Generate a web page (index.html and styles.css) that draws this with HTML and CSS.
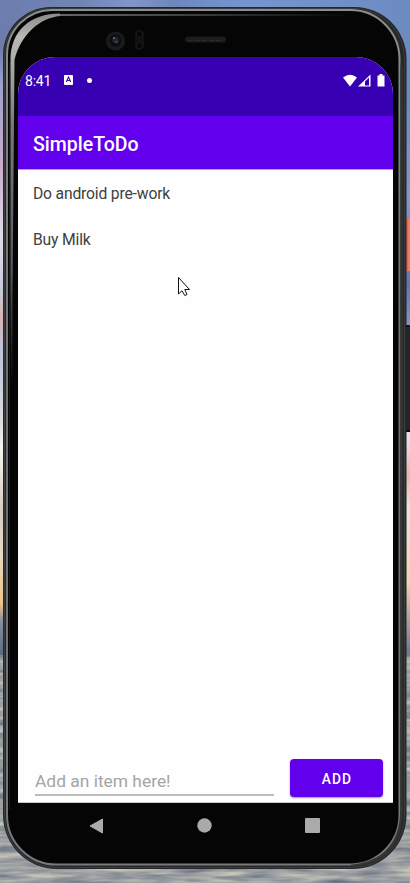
FILE: index.html
```
<!DOCTYPE html>
<html lang="en">
<head>
<meta charset="utf-8">
<title>SimpleToDo</title>
<link rel="stylesheet" href="styles.css">
</head>
<body>
<svg class="device" width="410" height="883" viewBox="0 0 410 883" aria-hidden="true">
  <defs>
    <linearGradient id="skyLeft" x1="0" y1="0" x2="0" y2="660" gradientUnits="userSpaceOnUse">
      <stop offset="0" stop-color="#6c80b0"/><stop offset=".07" stop-color="#6d7aac"/>
      <stop offset=".13" stop-color="#9ca3ce"/><stop offset=".25" stop-color="#cbaccd"/>
      <stop offset=".36" stop-color="#dfdce8"/><stop offset=".44" stop-color="#c9cbdc"/>
      <stop offset=".48" stop-color="#dcb5b2"/><stop offset=".53" stop-color="#bcc4da"/>
      <stop offset=".64" stop-color="#dcdcdf"/><stop offset=".68" stop-color="#f4f3ee"/>
      <stop offset=".77" stop-color="#d8cdc1"/><stop offset=".84" stop-color="#e8d9c4"/>
      <stop offset=".915" stop-color="#f0c384"/><stop offset=".94" stop-color="#8791a3"/>
      <stop offset="1" stop-color="#56647e"/>
    </linearGradient>
    <linearGradient id="skyRight" x1="0" y1="0" x2="0" y2="660" gradientUnits="userSpaceOnUse">
      <stop offset="0" stop-color="#6b8bc1"/><stop offset=".15" stop-color="#6c8bc2"/>
      <stop offset=".3" stop-color="#8995c6"/><stop offset=".43" stop-color="#6375ac"/>
      <stop offset=".49" stop-color="#8992bf"/><stop offset=".66" stop-color="#e3e3f0"/>
      <stop offset=".72" stop-color="#e5b6ad"/><stop offset=".77" stop-color="#e8e2df"/>
      <stop offset=".88" stop-color="#edd6b0"/><stop offset=".94" stop-color="#a9a29c"/>
      <stop offset="1" stop-color="#64708a"/>
    </linearGradient>
    <linearGradient id="topHues" x1="0" y1="0" x2="410" y2="0" gradientUnits="userSpaceOnUse">
      <stop offset="0" stop-color="#6c7dae"/><stop offset=".2" stop-color="#7185b5"/>
      <stop offset=".32" stop-color="#8295cb"/><stop offset=".42" stop-color="#6d87bd"/>
      <stop offset=".6" stop-color="#7595d0"/><stop offset="1" stop-color="#6b8bc1"/>
    </linearGradient>
    <linearGradient id="rim" x1="0" y1="8" x2="0" y2="869" gradientUnits="userSpaceOnUse">
      <stop offset="0" stop-color="#8c8f90"/><stop offset=".25" stop-color="#77797b"/>
      <stop offset=".5" stop-color="#6c6e72"/><stop offset="1" stop-color="#77797a"/>
    </linearGradient>
    <linearGradient id="gleam" x1="0" y1="15" x2="0" y2="380" gradientUnits="userSpaceOnUse">
      <stop offset="0" stop-color="#8c8e8a"/><stop offset=".06" stop-color="#b8b9b5"/>
      <stop offset=".14" stop-color="#a8aaa6"/>
      <stop offset=".3" stop-color="#77797b"/><stop offset=".7" stop-color="#55575a"/>
      <stop offset="1" stop-color="#080808"/>
    </linearGradient>
    <linearGradient id="gleamTop" x1="52" y1="0" x2="345" y2="0" gradientUnits="userSpaceOnUse">
      <stop offset="0" stop-color="#8a8c88"/><stop offset=".45" stop-color="#555"/><stop offset="1" stop-color="#0a0a0a"/>
    </linearGradient>
    <filter id="ripples" x="0" y="0" width="100%" height="100%" color-interpolation-filters="sRGB">
      <feTurbulence type="fractalNoise" baseFrequency=".02 .15" numOctaves="3" seed="8"/>
      <feColorMatrix values=".65 0 0 0 .29  .58 0 0 0 .34  .35 0 0 0 .46  0 0 0 0 1"/>
    </filter>
  </defs>
  <rect width="205" height="660" fill="url(#skyLeft)"/>
  <rect x="205" width="205" height="660" fill="url(#skyRight)"/>
  <rect width="410" height="22" fill="url(#topHues)"/>
  <rect y="655" width="410" height="228" filter="url(#ripples)"/>
  <rect x="406" y="218" width="6" height="53" rx="1" fill="#f17b60"/>
  <path d="M407 218v52" stroke="#c75745"/>
  <rect x="405" y="325" width="5" height="107" fill="#252525"/>
  <path d="M405 326h4M405 431h5" stroke="#090909" stroke-width="2"/>
  <path d="M51 7H354A52 52 0 0 1 406.500 59V815A54 54 0 0 1 352.500 869H57A54 54 0 0 1 3 815V55A48 48 0 0 1 51 7Z" fill="#252728"/>
  <path d="M52 8.500H354A50.500 50.500 0 0 1 404.500 59V815A52 52 0 0 1 352.500 867.500H57A52 52 0 0 1 4.500 815V55A46.500 46.500 0 0 1 52 8.500Z" fill="none" stroke="#3b3d3e"/>
  <path d="M53 10H350A49 49 0 0 1 399.500 59V815A49.500 49.500 0 0 1 350 864.500H57A49.500 49.500 0 0 1 7 815V55A45 45 0 0 1 53 10Z" fill="#050505" stroke="url(#rim)" stroke-width="2"/>
  <path d="M401.500 65V810Q401 861 351 866" fill="none" stroke="#343434" stroke-width="2.500"/>
  <path d="M9.500 62V810" stroke="#17191b"/>
  <path d="M10.500 300V60C10.500 31 30 13.500 60 13.500V16C40 18 21 34 14.500 60L12.500 300V380H11Z" fill="url(#gleam)"/>
  <path d="M58 15H345" stroke="url(#gleamTop)" stroke-width="1.500"/>
  <g fill="#181a1b">
    <circle cx="115.500" cy="41" r="9.500"/>
    <circle cx="115.500" cy="40.500" r="6" fill="#0b0d10"/>
    <circle cx="115.500" cy="40" r="3.200" fill="#23262c"/>
    <circle cx="116.500" cy="42" r="1.300" fill="#36496e"/>
    <circle cx="114" cy="38" r=".8" fill="#a5a5a5"/>
    <rect x="135" y="30" width="9" height="20" rx="4.500" fill="#111"/>
    <circle cx="139.500" cy="34" r="3.500" fill="#070707" stroke="#1d1d1d"/>
    <circle cx="139.500" cy="45.500" r="3.500" fill="#070707" stroke="#1d1d1d"/>
    <rect x="185" y="36.500" width="41" height="6" rx="3" fill="#1c1c1c"/>
    <path d="M188 40.500h34" stroke="#2a2a2a" stroke-dasharray="5 2"/>
  </g>
</svg>

<main class="phone">
  <section class="screen">
    <header class="status">
      <time class="clock">8:41</time>
      <svg class="keyboard" width="9" height="10" viewBox="0 0 9 10"><rect width="9" height="10" rx=".8" fill="#fff"/><path d="M2.300 7 4.500 2 6.700 7M3 5.500h3" fill="none" stroke="#3700b3" stroke-width="1.100"/></svg>
      <span class="dot"></span>
      <svg class="signals" width="42" height="13" viewBox="0 0 42 13" fill="#fff"><path d="M0 3.500Q7-2 14 3.500L7 12.500Z"/><path fill-rule="evenodd" d="M15 12.500 27.500 .5V12.500ZM22 11.500H26V3.500L22 7.500Z"/><path d="M36.500 0h3v1.500h2V12.500H34.500V1.500h2Z"/></svg>
    </header>
    <div class="appbar"><h1>SimpleToDo</h1></div>
    <ul class="todos">
      <li>Do android pre-work</li>
      <li>Buy Milk</li>
    </ul>
    <form class="composer">
      <label class="field">Add an item here!</label>
      <button class="add" type="button">ADD</button>
    </form>
  </section>
  <nav class="navbar">
    <svg width="15" height="16" viewBox="0 0 15 16"><path d="M13.500 1V15L1 8Z" fill="#aaa" stroke="#aaa" stroke-linejoin="round"/></svg>
    <svg width="15" height="15" viewBox="0 0 15 15"><circle cx="7.500" cy="7.500" r="7.200" fill="#aaa"/></svg>
    <svg width="15" height="15" viewBox="0 0 15 15"><rect width="15" height="15" rx="1" fill="#aaa"/></svg>
  </nav>
</main>
<svg class="pointer" width="14" height="21" viewBox="0 0 14 21" aria-hidden="true"><path d="M.5 .5V17L4 13.800 6.800 18.500 9 17.500 6.800 12.500H11.500Z" fill="#fff" stroke="#111" stroke-width="1"/></svg>
</body>
</html>
```
FILE: styles.css
```
* { box-sizing: border-box; }
body {
  margin: 0;
  width: 410px;
  height: 883px;
  overflow: hidden;
  font-family: Roboto, sans-serif;
}
svg { display: block; }
.device { position: absolute; top: 0; left: 0; }
.phone {
  position: relative;
  display: flex;
  flex-direction: column;
  height: 883px;
  padding: 57px 17px 0 18px;
}
.screen {
  display: flex;
  flex-direction: column;
  height: 746px;
  background: #fefefe;
  border-radius: 37px 37px 0 0;
  overflow: hidden;
}
.status {
  display: flex;
  align-items: center;
  height: 59px;
  padding: 0 8px 13px 7px;
  background: #3700b3;
  color: #fff;
}
.clock { width: 39px; font-size: 14px; letter-spacing: -.2px; line-height: 16px; padding-top: 1px; }
.dot { width: 5px; height: 5px; margin-left: 14px; border-radius: 50%; background: #fff; }
.signals { margin-left: auto; }
.appbar {
  display: flex;
  align-items: center;
  height: 54px;
  padding: 4px 15px 0;
  background: #6200ee;
  border-bottom: 1px solid #b999ed;
  color: #fff;
}
h1 { margin: 0; font-size: 19.500px; font-weight: 500; line-height: 24px; }
.todos { flex: 1; margin: 0; padding: 0; list-style: none; }
.todos li {
  display: flex;
  align-items: center;
  height: 46px;
  padding: 1px 15px 0;
  color: #404040;
  font-size: 15.700px;
  letter-spacing: -.18px;
}
.composer {
  display: flex;
  gap: 16px;
  height: 45px;
  padding: 0 10px 0 17px;
  border-bottom: 1px solid #c8c8c8;
}
.field {
  width: 239px;
  height: 38px;
  padding-top: 13px;
  border-bottom: 2px solid #bdbdbd;
  color: #a5a5a5;
  font-size: 17.400px;
  line-height: 21px;
}
.add {
  width: 93px;
  height: 38px;
  margin-top: 1px;
  padding: 2px 0 0 1px;
  border: 0;
  border-radius: 4px;
  background: #6200ee;
  box-shadow: 0 1px 2px #0006;
  color: #fff;
  font: 500 13.800px Roboto, sans-serif;
  letter-spacing: 1.100px;
}
.navbar {
  display: flex;
  align-items: center;
  justify-content: space-between;
  height: 46px;
  padding: 0 73px 1px 71px;
}
.pointer { position: absolute; top: 277px; left: 178px; }
```
